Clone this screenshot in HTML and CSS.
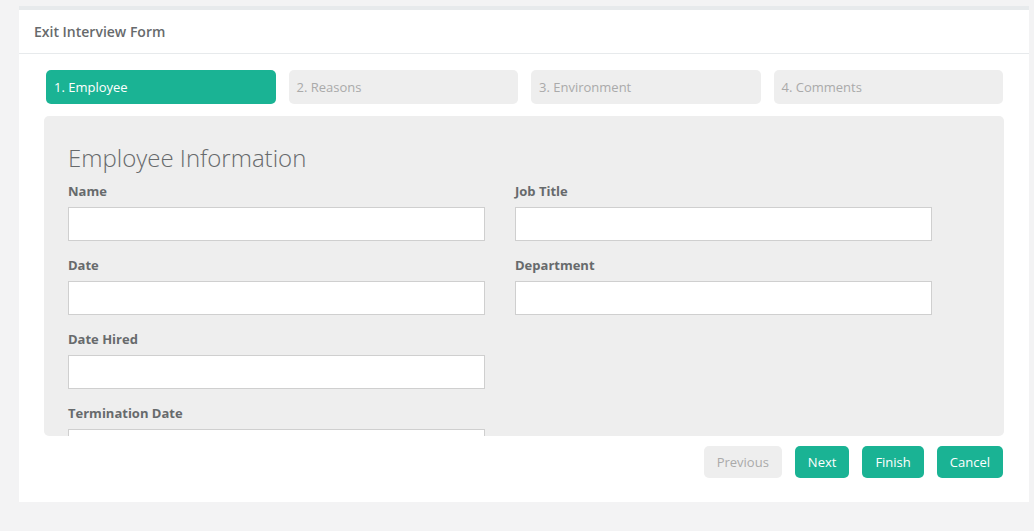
FILE: index.html
```html
<!DOCTYPE html>
<html>
<head>
<meta charset="utf-8">
<title>Exit Interview Form</title>
<link rel="stylesheet" href="styles.css">
</head>
<body>
<div class="card">
  <div class="card-header">Exit Interview Form</div>
  <div class="card-body">
    <ul class="steps">
      <li class="step current">1. Employee</li>
      <li class="step">2. Reasons</li>
      <li class="step">3. Environment</li>
      <li class="step">4. Comments</li>
    </ul>
    <div class="panel">
      <h2 class="panel-title">Employee Information</h2>
      <div class="fields">
        <div class="field"><label>Name</label><input type="text"></div>
        <div class="field"><label>Job Title</label><input type="text"></div>
        <div class="field"><label>Date</label><input type="text"></div>
        <div class="field"><label>Department</label><input type="text"></div>
        <div class="field"><label>Date Hired</label><input type="text"></div>
        <div class="field empty"></div>
        <div class="field"><label>Termination Date</label><input type="text"></div>
      </div>
    </div>
    <div class="actions">
      <button class="btn disabled">Previous</button>
      <button class="btn">Next</button>
      <button class="btn">Finish</button>
      <button class="btn">Cancel</button>
    </div>
  </div>
</div>
</body>
</html>
```

FILE: styles.css
```css
html, body {
  margin: 0;
  padding: 0;
}
body {
  background: #f3f3f4;
  font-family: "Open Sans", "Liberation Sans", sans-serif;
  font-size: 13px;
  color: #676a6c;
  padding: 6px 0 0 19px;
}
.card {
  width: 1010px;
  background: #ffffff;
  border-top: 4px solid #e7eaec;
}
.card-header {
  height: 43px;
  line-height: 43px;
  padding: 0 15px;
  font-size: 14px;
  font-weight: 600;
  color: #676a6c;
  border-bottom: 1px solid #e7eaec;
}
.card-body {
  padding: 16px 25px 24px 25px;
}
.steps {
  list-style: none;
  margin: 0 1px 0 2px;
  padding: 0;
  display: grid;
  grid-template-columns: repeat(4, 1fr);
  column-gap: 13px;
}
.step {
  background: #eeeeee;
  color: #aaaaaa;
  border-radius: 5px;
  padding: 8px;
  line-height: 18px;
  font-size: 13px;
}
.step.current {
  background: #1ab394;
  color: #ffffff;
}
.panel {
  margin-top: 12px;
  height: 320px;
  box-sizing: border-box;
  background: #eeeeee;
  border-radius: 5px;
  overflow: hidden;
  padding: 29px 24px 0 24px;
}
.panel-title {
  margin: 0;
  font-size: 24px;
  line-height: 26px;
  font-weight: 300;
  color: #676a6c;
}
.fields {
  margin-top: 11px;
  display: grid;
  grid-template-columns: 417px 417px;
  column-gap: 30px;
}
.field {
  margin-bottom: 15px;
}
.field label {
  display: block;
  font-weight: 700;
  font-size: 13px;
  line-height: 18px;
  margin-bottom: 7px;
  color: #676a6c;
}
.field input {
  display: block;
  width: 100%;
  height: 34px;
  box-sizing: border-box;
  margin: 0;
  border: 1px solid #cfcfcf;
  border-radius: 0;
  background: #ffffff;
  font-family: inherit;
  font-size: 13px;
  padding: 6px 12px;
}
.actions {
  margin: 10px 1px 0 0;
  display: flex;
  justify-content: flex-end;
  column-gap: 13px;
}
.btn {
  height: 32px;
  line-height: 32px;
  padding: 0 13px;
  border: none;
  border-radius: 5px;
  background: #1ab394;
  color: #ffffff;
  font-family: inherit;
  font-size: 13px;
  cursor: pointer;
}
.btn.disabled {
  background: #eeeeee;
  color: #aaaaaa;
}
```
